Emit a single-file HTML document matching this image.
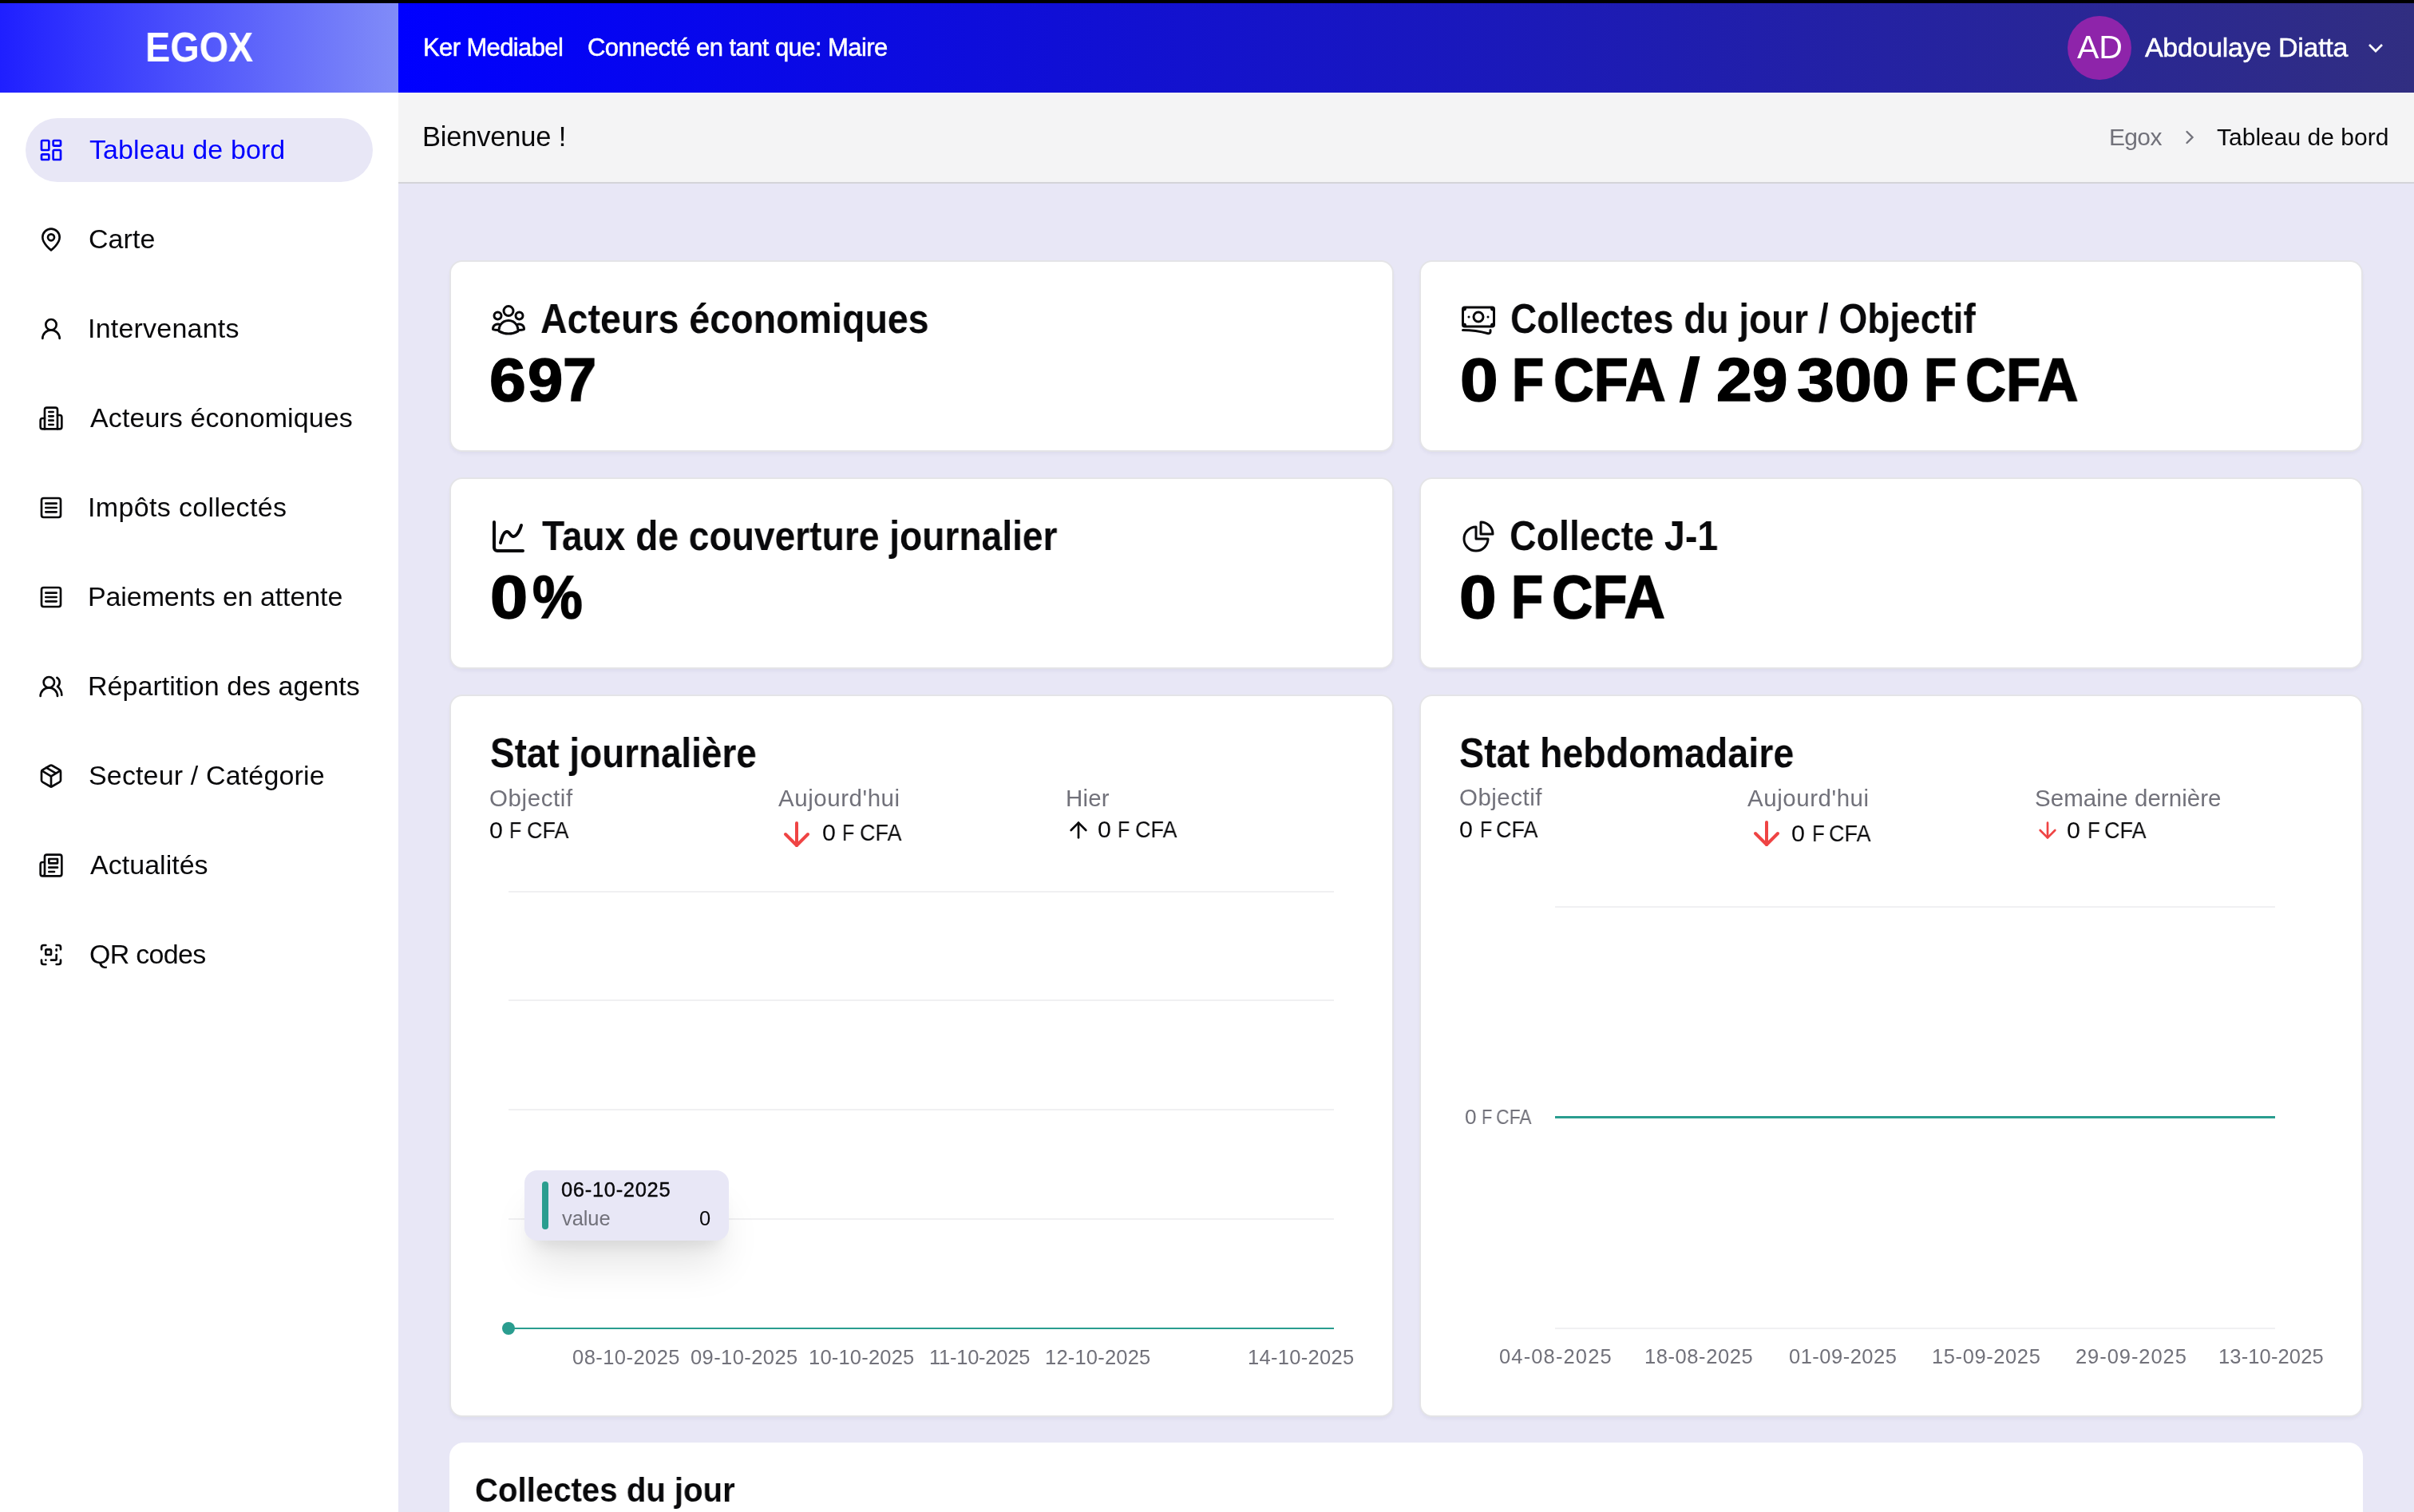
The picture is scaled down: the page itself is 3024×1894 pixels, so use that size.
<!DOCTYPE html><html lang="fr"><head><meta charset="utf-8"><title>Egox - Tableau de bord</title><style>
html,body{margin:0;padding:0;width:3024px;height:1894px;overflow:hidden;background:#e8e7f6;font-family:"Liberation Sans",sans-serif;}
.a{position:absolute;display:block}
.t{position:absolute;white-space:nowrap;margin:0;will-change:transform}
.card{position:absolute;background:#fff;border:2px solid #e4e4e7;border-radius:16px;box-sizing:border-box;box-shadow:0 3px 5px -1px rgba(40,40,90,0.06)}
.grid{position:absolute;height:2px;background:#f0f0f2}
@media (max-width:2000px){html{zoom:0.5}}
</style></head><body>
<div class="a" style="left:0;top:0;width:3024px;height:4px;background:#000"></div>
<div class="a" style="left:0;top:4px;width:499px;height:112px;background:linear-gradient(to right,#1f1fff,#818cf8)"></div>
<div class="a" style="left:499px;top:4px;width:2525px;height:112px;background:linear-gradient(to right,#0000ff,#312e81)"></div>
<div class="a" style="left:2590px;top:20px;width:80px;height:80px;border-radius:50%;background:#8e24aa"></div>
<svg class="a" style="left:2960.1px;top:44.3px" width="32" height="32" viewBox="0 0 24 24" fill="none" stroke="#fff" stroke-width="2" stroke-linecap="butt" stroke-linejoin="miter"><path d="m6 9 6 6 6-6"/></svg>
<div class="a" style="left:0;top:116px;width:499px;height:1778px;background:#fff"></div>
<div class="a" style="left:32px;top:148px;width:435px;height:80px;border-radius:40px;background:#e8e7f6"></div>
<svg class="a" style="left:47.8px;top:172.0px" width="32" height="32" viewBox="0 0 24 24" fill="none" stroke="#0000ff" stroke-width="2" stroke-linecap="round" stroke-linejoin="round"><rect width="7" height="9" x="3" y="3" rx="1"/><rect width="7" height="5" x="14" y="3" rx="1"/><rect width="7" height="9" x="14" y="12" rx="1"/><rect width="7" height="5" x="3" y="16" rx="1"/></svg>
<svg class="a" style="left:47.8px;top:284.0px" width="32" height="32" viewBox="0 0 24 24" fill="none" stroke="#09090b" stroke-width="2" stroke-linecap="round" stroke-linejoin="round"><path d="M20 10c0 6-8 12-8 12s-8-6-8-12a8 8 0 0 1 16 0Z"/><circle cx="12" cy="10" r="3"/></svg>
<svg class="a" style="left:47.8px;top:396.0px" width="32" height="32" viewBox="0 0 24 24" fill="none" stroke="#09090b" stroke-width="2" stroke-linecap="round" stroke-linejoin="round"><circle cx="12" cy="8" r="5"/><path d="M20 21a8 8 0 0 0-16 0"/></svg>
<svg class="a" style="left:47.8px;top:508.0px" width="32" height="32" viewBox="0 0 24 24" fill="none" stroke="#09090b" stroke-width="2" stroke-linecap="round" stroke-linejoin="round"><path d="M6 22V4a2 2 0 0 1 2-2h8a2 2 0 0 1 2 2v18Z"/><path d="M6 12H4a2 2 0 0 0-2 2v6a2 2 0 0 0 2 2h2"/><path d="M18 9h2a2 2 0 0 1 2 2v9a2 2 0 0 1-2 2h-2"/><path d="M10 6h4"/><path d="M10 10h4"/><path d="M10 14h4"/><path d="M10 18h4"/></svg>
<svg class="a" style="left:47.8px;top:620.0px" width="32" height="32" viewBox="0 0 24 24" fill="none" stroke="#09090b" stroke-width="2" stroke-linecap="round" stroke-linejoin="round"><rect width="18" height="18" x="3" y="3" rx="2"/><path d="M7 8h10"/><path d="M7 12h10"/><path d="M7 16h10"/></svg>
<svg class="a" style="left:47.8px;top:732.0px" width="32" height="32" viewBox="0 0 24 24" fill="none" stroke="#09090b" stroke-width="2" stroke-linecap="round" stroke-linejoin="round"><rect width="18" height="18" x="3" y="3" rx="2"/><path d="M7 8h10"/><path d="M7 12h10"/><path d="M7 16h10"/></svg>
<svg class="a" style="left:47.8px;top:844.0px" width="32" height="32" viewBox="0 0 24 24" fill="none" stroke="#09090b" stroke-width="2" stroke-linecap="round" stroke-linejoin="round"><path d="M18 21a8 8 0 0 0-16 0"/><circle cx="10" cy="8" r="5"/><path d="M22 20c0-3.37-2-6.5-4-8a5 5 0 0 0-.45-8.3"/></svg>
<svg class="a" style="left:47.8px;top:956.0px" width="32" height="32" viewBox="0 0 24 24" fill="none" stroke="#09090b" stroke-width="2" stroke-linecap="round" stroke-linejoin="round"><path d="M11 21.73a2 2 0 0 0 2 0l7-4A2 2 0 0 0 21 16V8a2 2 0 0 0-1-1.73l-7-4a2 2 0 0 0-2 0l-7 4A2 2 0 0 0 3 8v8a2 2 0 0 0 1 1.73z"/><path d="M12 22V12"/><path d="m3.3 7 7.703 4.734a2 2 0 0 0 1.994 0L20.7 7"/><path d="m7.5 4.27 9 5.15"/></svg>
<svg class="a" style="left:47.8px;top:1068.0px" width="32" height="32" viewBox="0 0 24 24" fill="none" stroke="#09090b" stroke-width="2" stroke-linecap="round" stroke-linejoin="round"><path d="M4 22h16a2 2 0 0 0 2-2V4a2 2 0 0 0-2-2H8a2 2 0 0 0-2 2v16a2 2 0 0 1-2 2Zm0 0a2 2 0 0 1-2-2v-9c0-1.1.9-2 2-2h2"/><path d="M18 14h-8"/><path d="M15 18h-5"/><path d="M10 6h8v4h-8V6Z"/></svg>
<svg class="a" style="left:47.8px;top:1180.0px" width="32" height="32" viewBox="0 0 24 24" fill="none" stroke="#09090b" stroke-width="2" stroke-linecap="round" stroke-linejoin="round"><path d="M17 12v4a1 1 0 0 1-1 1h-4"/><path d="M17 3h2a2 2 0 0 1 2 2v2"/><path d="M17 8V7"/><path d="M21 17v2a2 2 0 0 1-2 2h-2"/><path d="M3 7V5a2 2 0 0 1 2-2h2"/><path d="M7 17h.01"/><path d="M7 21H5a2 2 0 0 1-2-2v-2"/><rect x="7" y="7" width="5" height="5" rx="1"/></svg>
<div class="a" style="left:499px;top:116px;width:2525px;height:112px;background:#f4f4f5;border-bottom:2px solid #d4d4d8"></div>
<svg class="a" style="left:2728.7px;top:158.2px" width="28" height="28" viewBox="0 0 24 24" fill="none" stroke="#71717a" stroke-width="2" stroke-linecap="round" stroke-linejoin="miter"><path d="m9 18 6-6-6-6"/></svg>
<div class="card" style="left:563px;top:326px;width:1183px;height:240px;"></div>
<div class="card" style="left:1778px;top:326px;width:1182px;height:240px;"></div>
<div class="card" style="left:563px;top:598px;width:1183px;height:240px;"></div>
<div class="card" style="left:1778px;top:598px;width:1182px;height:240px;"></div>
<div class="card" style="left:563px;top:870px;width:1183px;height:905px;"></div>
<div class="card" style="left:1778px;top:870px;width:1182px;height:905px;"></div>
<div class="a" style="left:563px;top:1807px;width:2397px;height:200px;background:#fff;border-radius:18px"></div>
<svg class="a" style="left:613px;top:376px" width="48" height="48" viewBox="0 0 24 24" fill="none" stroke="#09090b" stroke-width="1.5" stroke-linecap="round" stroke-linejoin="round"><path d="M18 18.72a9.094 9.094 0 0 0 3.741-.479 3 3 0 0 0-4.682-2.72m.94 3.198.001.031c0 .225-.012.447-.037.666A11.944 11.944 0 0 1 12 21c-2.17 0-4.207-.576-5.963-1.584A6.062 6.062 0 0 1 6 18.719m12 0a5.971 5.971 0 0 0-.941-3.197m0 0A5.995 5.995 0 0 0 12 12.75a5.995 5.995 0 0 0-5.058 2.772m0 0a3 3 0 0 0-4.681 2.72 8.986 8.986 0 0 0 3.74.477m.94-3.197a5.971 5.971 0 0 0-.94 3.197M15 6.75a3 3 0 1 1-6 0 3 3 0 0 1 6 0Zm6 3a2.25 2.25 0 1 1-4.5 0 2.25 2.25 0 0 1 4.5 0Zm-13.5 0a2.25 2.25 0 1 1-4.5 0 2.25 2.25 0 0 1 4.5 0Z"/></svg>
<svg class="a" style="left:1828.3px;top:375.5px" width="48" height="48" viewBox="0 0 24 24" fill="none" stroke="#09090b" stroke-width="1.5" stroke-linecap="round" stroke-linejoin="round"><path d="M2.25 18.75a60.07 60.07 0 0 1 15.797 2.101c.727.198 1.453-.342 1.453-1.096V18.75M3.75 4.5v.75A.75.75 0 0 1 3 6h-.75m0 0v-.375c0-.621.504-1.125 1.125-1.125H20.25M2.25 6v9m18-10.5v.75c0 .414.336.75.75.75h.75m-1.5-1.5h.375c.621 0 1.125.504 1.125 1.125v9.75c0 .621-.504 1.125-1.125 1.125h-.375m1.5-1.5H21a.75.75 0 0 0-.75.75v.75m0 0H3.75m0 0h-.375a1.125 1.125 0 0 1-1.125-1.125V15m1.5 1.5v-.75A.75.75 0 0 0 3 15h-.75M15 10.5a3 3 0 1 1-6 0 3 3 0 0 1 6 0Zm3 0h.008v.008H18V10.5Zm-12 0h.008v.008H6V10.5Z"/></svg>
<svg class="a" style="left:613.3px;top:648px" width="48" height="48" viewBox="0 0 24 24" fill="none" stroke="#09090b" stroke-width="2" stroke-linecap="round" stroke-linejoin="round"><path d="M3 3v16a2 2 0 0 0 2 2h16"/><path d="M7 16c.5-2 1.5-7 4-7 2 0 2 3 4 3 2.5 0 4.5-5 5-7"/></svg>
<svg class="a" style="left:1827.8px;top:647.6px" width="48" height="48" viewBox="0 0 24 24" fill="none" stroke="#09090b" stroke-width="1.5" stroke-linecap="round" stroke-linejoin="round"><path d="M10.5 6a7.5 7.5 0 1 0 7.5 7.5h-7.5V6Z"/><path d="M13.5 10.5H21A7.5 7.5 0 0 0 13.5 3v7.5Z"/></svg>
<svg class="a" style="left:974px;top:1020.6px" width="48" height="48" viewBox="0 0 24 24" fill="none" stroke="#ef4444" stroke-width="2" stroke-linecap="round" stroke-linejoin="round"><path d="M12 5v14"/><path d="m19 12-7 7-7-7"/></svg>
<svg class="a" style="left:1335px;top:1024px" width="32" height="32" viewBox="0 0 24 24" fill="none" stroke="#09090b" stroke-width="2" stroke-linecap="round" stroke-linejoin="round"><path d="m5 12 7-7 7 7"/><path d="M12 19V5"/></svg>
<svg class="a" style="left:2188.6px;top:1020px" width="48" height="48" viewBox="0 0 24 24" fill="none" stroke="#ef4444" stroke-width="2" stroke-linecap="round" stroke-linejoin="round"><path d="M12 5v14"/><path d="m19 12-7 7-7-7"/></svg>
<svg class="a" style="left:2549.2px;top:1024px" width="32" height="32" viewBox="0 0 24 24" fill="none" stroke="#ef4444" stroke-width="2" stroke-linecap="round" stroke-linejoin="round"><path d="M12 5v14"/><path d="m19 12-7 7-7-7"/></svg>
<div class="grid" style="left:637px;top:1115.5px;width:1034px"></div>
<div class="grid" style="left:637px;top:1252px;width:1034px"></div>
<div class="grid" style="left:637px;top:1389px;width:1034px"></div>
<div class="grid" style="left:637px;top:1526px;width:1034px"></div>
<div class="a" style="left:637px;top:1662.6px;width:1034px;height:2.4px;background:#2a9d8f"></div>
<div class="a" style="left:629px;top:1656px;width:16px;height:16px;border-radius:50%;background:#2a9d8f"></div>
<div class="grid" style="left:1948px;top:1134.7px;width:902px"></div>
<div class="grid" style="left:1948px;top:1662.5px;width:902px"></div>
<div class="a" style="left:1948px;top:1398.3px;width:902px;height:2.4px;background:#2a9d8f"></div>
<div class="a" style="left:657.3px;top:1466px;width:255.4px;height:87.8px;border-radius:16px;background:#e8e7f6;box-shadow:0 40px 50px -10px rgba(0,0,0,0.10),0 16px 20px -12px rgba(0,0,0,0.10)"></div>
<div class="a" style="left:679px;top:1480px;width:8.2px;height:60px;border-radius:4px;background:#2a9d8f"></div>
<div class="t" id="egox" style="left:181.78px;top:33.06px;font-size:52px;line-height:52px;font-weight:700;color:#fff;letter-spacing:0.000px;transform:scaleX(0.8999);transform-origin:0 0;">EGOX</div>
<div class="t" id="ker" style="left:529.74px;top:44.10px;font-size:31px;line-height:31px;font-weight:500;color:#fff;letter-spacing:-0.619px;-webkit-text-stroke:0.5px #fff">Ker Mediabel</div>
<div class="t" id="conn" style="left:736.14px;top:44.10px;font-size:31px;line-height:31px;font-weight:500;color:#fff;letter-spacing:-0.577px;-webkit-text-stroke:0.5px #fff">Connecté en tant que: Maire</div>
<div class="t" id="ad" style="left:2601.54px;top:38.95px;font-size:41px;line-height:41px;font-weight:400;color:#fff;letter-spacing:0.000px;">AD</div>
<div class="t" id="name" style="left:2687.46px;top:42.37px;font-size:34px;line-height:34px;font-weight:500;color:#fff;letter-spacing:-0.306px;-webkit-text-stroke:0.5px #fff">Abdoulaye Diatta</div>
<div class="t" id="bienv" style="left:528.93px;top:153.85px;font-size:34.5px;line-height:34.5px;font-weight:400;color:#09090b;letter-spacing:-0.200px;">Bienvenue !</div>
<div class="t" id="bc1" style="left:2642.20px;top:156.85px;font-size:30px;line-height:30px;font-weight:400;color:#71717a;letter-spacing:-0.667px;">Egox</div>
<div class="t" id="bc2" style="left:2777.20px;top:156.85px;font-size:30px;line-height:30px;font-weight:400;color:#09090b;letter-spacing:0.015px;">Tableau de bord</div>
<div class="t" id="s0" style="left:112.06px;top:170.27px;font-size:34px;line-height:34px;font-weight:400;color:#0000ff;letter-spacing:0.100px;">Tableau de bord</div>
<div class="t" id="s1" style="left:111.06px;top:282.27px;font-size:34px;line-height:34px;font-weight:400;color:#09090b;letter-spacing:0.050px;">Carte</div>
<div class="t" id="s2" style="left:110.06px;top:394.27px;font-size:34px;line-height:34px;font-weight:400;color:#09090b;letter-spacing:0.216px;">Intervenants</div>
<div class="t" id="s3" style="left:113.06px;top:506.27px;font-size:34px;line-height:34px;font-weight:400;color:#09090b;letter-spacing:0.099px;">Acteurs économiques</div>
<div class="t" id="s4" style="left:110.06px;top:618.27px;font-size:34px;line-height:34px;font-weight:400;color:#09090b;letter-spacing:0.347px;">Impôts collectés</div>
<div class="t" id="s5" style="left:110.06px;top:730.27px;font-size:34px;line-height:34px;font-weight:400;color:#09090b;letter-spacing:-0.106px;">Paiements en attente</div>
<div class="t" id="s6" style="left:110.06px;top:842.27px;font-size:34px;line-height:34px;font-weight:400;color:#09090b;letter-spacing:0.030px;">Répartition des agents</div>
<div class="t" id="s7" style="left:111.06px;top:954.27px;font-size:34px;line-height:34px;font-weight:400;color:#09090b;letter-spacing:0.146px;">Secteur / Catégorie</div>
<div class="t" id="s8" style="left:113.06px;top:1066.27px;font-size:34px;line-height:34px;font-weight:400;color:#09090b;letter-spacing:0.024px;">Actualités</div>
<div class="t" id="s9" style="left:112.06px;top:1178.27px;font-size:34px;line-height:34px;font-weight:400;color:#09090b;letter-spacing:-0.714px;">QR codes</div>
<div class="t" id="c1t" style="left:677.18px;top:373.26px;font-size:52px;line-height:52px;font-weight:700;color:#09090b;letter-spacing:0.000px;transform:scaleX(0.8957);transform-origin:0 0;">Acteurs économiques</div>
<div class="t" id="c2t" style="left:1891.78px;top:373.26px;font-size:52px;line-height:52px;font-weight:700;color:#09090b;letter-spacing:0.000px;transform:scaleX(0.8845);transform-origin:0 0;">Collectes du jour / Objectif</div>
<div class="t" id="c3t" style="left:678.88px;top:645.46px;font-size:52px;line-height:52px;font-weight:700;color:#09090b;letter-spacing:0.000px;transform:scaleX(0.8876);transform-origin:0 0;">Taux de couverture journalier</div>
<div class="t" id="c4t" style="left:1891.38px;top:645.46px;font-size:52px;line-height:52px;font-weight:700;color:#09090b;letter-spacing:0.000px;transform:scaleX(0.8947);transform-origin:0 0;">Collecte J-1</div>
<div class="t" id="d_t" style="left:614.18px;top:917.36px;font-size:52px;line-height:52px;font-weight:700;color:#09090b;letter-spacing:0.000px;transform:scaleX(0.8815);transform-origin:0 0;">Stat journalière</div>
<div class="t" id="d_o" style="left:612.93px;top:984.77px;font-size:29.5px;line-height:29.5px;font-weight:400;color:#71717a;letter-spacing:0.600px;">Objectif</div>
<div class="t" id="d_a" style="left:974.73px;top:985.37px;font-size:29.5px;line-height:29.5px;font-weight:400;color:#71717a;letter-spacing:0.540px;">Aujourd&#x27;hui</div>
<div class="t" id="d_h" style="left:1334.73px;top:985.37px;font-size:29.5px;line-height:29.5px;font-weight:400;color:#71717a;letter-spacing:0.134px;">Hier</div>
<div class="t" id="w_t" style="left:1827.78px;top:916.96px;font-size:52px;line-height:52px;font-weight:700;color:#09090b;letter-spacing:0.000px;transform:scaleX(0.8956);transform-origin:0 0;">Stat hebdomadaire</div>
<div class="t" id="w_o" style="left:1828.13px;top:984.47px;font-size:29.5px;line-height:29.5px;font-weight:400;color:#71717a;letter-spacing:0.485px;">Objectif</div>
<div class="t" id="w_a" style="left:2188.93px;top:985.07px;font-size:29.5px;line-height:29.5px;font-weight:400;color:#71717a;letter-spacing:0.540px;">Aujourd&#x27;hui</div>
<div class="t" id="w_s" style="left:2549.13px;top:985.17px;font-size:29.5px;line-height:29.5px;font-weight:400;color:#71717a;letter-spacing:0.041px;">Semaine dernière</div>
<div class="t" id="dx0" style="left:716.87px;top:1687.65px;font-size:25.5px;line-height:25.5px;font-weight:400;color:#71717a;letter-spacing:0.445px;">08-10-2025</div>
<div class="t" id="dx1" style="left:865.47px;top:1687.65px;font-size:25.5px;line-height:25.5px;font-weight:400;color:#71717a;letter-spacing:0.421px;">09-10-2025</div>
<div class="t" id="dx2" style="left:1013.47px;top:1687.65px;font-size:25.5px;line-height:25.5px;font-weight:400;color:#71717a;letter-spacing:0.201px;">10-10-2025</div>
<div class="t" id="dx3" style="left:1163.67px;top:1687.65px;font-size:25.5px;line-height:25.5px;font-weight:400;color:#71717a;letter-spacing:-0.246px;">11-10-2025</div>
<div class="t" id="dx4" style="left:1308.67px;top:1687.65px;font-size:25.5px;line-height:25.5px;font-weight:400;color:#71717a;letter-spacing:0.201px;">12-10-2025</div>
<div class="t" id="dx5" style="left:1563.07px;top:1687.65px;font-size:25.5px;line-height:25.5px;font-weight:400;color:#71717a;letter-spacing:0.312px;">14-10-2025</div>
<div class="t" id="wx0" style="left:1877.67px;top:1687.15px;font-size:25.5px;line-height:25.5px;font-weight:400;color:#71717a;letter-spacing:1.135px;">04-08-2025</div>
<div class="t" id="wx1" style="left:2060.07px;top:1687.15px;font-size:25.5px;line-height:25.5px;font-weight:400;color:#71717a;letter-spacing:0.579px;">18-08-2025</div>
<div class="t" id="wx2" style="left:2241.17px;top:1687.15px;font-size:25.5px;line-height:25.5px;font-weight:400;color:#71717a;letter-spacing:0.488px;">01-09-2025</div>
<div class="t" id="wx3" style="left:2420.27px;top:1687.15px;font-size:25.5px;line-height:25.5px;font-weight:400;color:#71717a;letter-spacing:0.599px;">15-09-2025</div>
<div class="t" id="wx4" style="left:2599.77px;top:1687.15px;font-size:25.5px;line-height:25.5px;font-weight:400;color:#71717a;letter-spacing:0.934px;">29-09-2025</div>
<div class="t" id="wx5" style="left:2778.57px;top:1687.15px;font-size:25.5px;line-height:25.5px;font-weight:400;color:#71717a;letter-spacing:0.135px;">13-10-2025</div>
<div class="t" id="tt_d" style="left:703.07px;top:1478.45px;font-size:25.5px;line-height:25.5px;font-weight:500;color:#09090b;letter-spacing:0.688px;-webkit-text-stroke:0.4px #09090b">06-10-2025</div>
<div class="t" id="tt_v" style="left:704.07px;top:1514.25px;font-size:25.5px;line-height:25.5px;font-weight:400;color:#71717a;letter-spacing:-0.100px;">value</div>
<div class="t" id="tt_0" style="left:876.47px;top:1514.25px;font-size:25.5px;line-height:25.5px;font-weight:400;color:#09090b;letter-spacing:-0.800px;">0</div>
<div class="t" id="cdj" style="left:594.92px;top:1845.16px;font-size:43px;line-height:43px;font-weight:700;color:#09090b;letter-spacing:0.000px;transform:scaleX(0.9339);transform-origin:0 0;">Collectes du jour</div>
<div class="t" id="c1v_0" style="left:613.31px;top:437.76px;font-size:76.5px;line-height:76.5px;font-weight:700;color:#000;letter-spacing:0.000px;transform:scaleX(1.0775);transform-origin:0 0;-webkit-text-stroke:1.6px #000">6</div>
<div class="t" id="c1v_1" style="left:661.41px;top:437.76px;font-size:76.5px;line-height:76.5px;font-weight:700;color:#000;letter-spacing:0.000px;transform:scaleX(1.0413);transform-origin:0 0;-webkit-text-stroke:1.6px #000">9</div>
<div class="t" id="c1v_2" style="left:705.21px;top:437.76px;font-size:76.5px;line-height:76.5px;font-weight:700;color:#000;letter-spacing:0.000px;transform:scaleX(0.9899);transform-origin:0 0;-webkit-text-stroke:1.6px #000">7</div>
<div class="t" id="c3v_0" style="left:613.71px;top:709.76px;font-size:76.5px;line-height:76.5px;font-weight:700;color:#000;letter-spacing:0.000px;transform:scaleX(1.1081);transform-origin:0 0;-webkit-text-stroke:1.6px #000">0</div>
<div class="t" id="c3v_1" style="left:666.61px;top:709.76px;font-size:76.5px;line-height:76.5px;font-weight:700;color:#000;letter-spacing:0.000px;transform:scaleX(0.9215);transform-origin:0 0;-webkit-text-stroke:1.6px #000">%</div>
<div class="t" id="c2v_0" style="left:1829.01px;top:437.96px;font-size:76.5px;line-height:76.5px;font-weight:700;color:#000;letter-spacing:0.000px;transform:scaleX(1.1187);transform-origin:0 0;-webkit-text-stroke:1.6px #000">0</div>
<div class="t" id="c2v_1" style="left:1893.91px;top:437.96px;font-size:76.5px;line-height:76.5px;font-weight:700;color:#000;letter-spacing:0.000px;transform:scaleX(0.8588);transform-origin:0 0;-webkit-text-stroke:1.6px #000">F</div>
<div class="t" id="c2v_2" style="left:1945.51px;top:437.96px;font-size:76.5px;line-height:76.5px;font-weight:700;color:#000;letter-spacing:0.000px;transform:scaleX(0.9188);transform-origin:0 0;-webkit-text-stroke:1.6px #000">CFA</div>
<div class="t" id="c2v_3" style="left:2104.31px;top:437.96px;font-size:76.5px;line-height:76.5px;font-weight:700;color:#000;letter-spacing:0.000px;transform:scaleX(1.1922);transform-origin:0 0;-webkit-text-stroke:1.6px #000">/</div>
<div class="t" id="c2v_4" style="left:2149.81px;top:437.96px;font-size:76.5px;line-height:76.5px;font-weight:700;color:#000;letter-spacing:0.000px;transform:scaleX(1.0512);transform-origin:0 0;-webkit-text-stroke:1.6px #000">29</div>
<div class="t" id="c2v_5" style="left:2251.31px;top:437.96px;font-size:76.5px;line-height:76.5px;font-weight:700;color:#000;letter-spacing:0.000px;transform:scaleX(1.1040);transform-origin:0 0;-webkit-text-stroke:1.6px #000">300</div>
<div class="t" id="c2v_6" style="left:2410.41px;top:437.96px;font-size:76.5px;line-height:76.5px;font-weight:700;color:#000;letter-spacing:0.000px;transform:scaleX(0.8804);transform-origin:0 0;-webkit-text-stroke:1.6px #000">F</div>
<div class="t" id="c2v_7" style="left:2461.61px;top:437.96px;font-size:76.5px;line-height:76.5px;font-weight:700;color:#000;letter-spacing:0.000px;transform:scaleX(0.9239);transform-origin:0 0;-webkit-text-stroke:1.6px #000">CFA</div>
<div class="t" id="c4v_0" style="left:1827.61px;top:709.96px;font-size:76.5px;line-height:76.5px;font-weight:700;color:#000;letter-spacing:0.000px;transform:scaleX(1.0954);transform-origin:0 0;-webkit-text-stroke:1.6px #000">0</div>
<div class="t" id="c4v_1" style="left:1892.51px;top:709.96px;font-size:76.5px;line-height:76.5px;font-weight:700;color:#000;letter-spacing:0.000px;transform:scaleX(0.8588);transform-origin:0 0;-webkit-text-stroke:1.6px #000">F</div>
<div class="t" id="c4v_2" style="left:1944.11px;top:709.96px;font-size:76.5px;line-height:76.5px;font-weight:700;color:#000;letter-spacing:0.000px;transform:scaleX(0.9266);transform-origin:0 0;-webkit-text-stroke:1.6px #000">CFA</div>
<div class="t" id="d_ov_0" style="left:612.93px;top:1024.67px;font-size:29.5px;line-height:29.5px;font-weight:400;color:#09090b;letter-spacing:0.000px;transform:scaleX(1.0292);transform-origin:0 0;">0</div>
<div class="t" id="d_ov_1" style="left:638.43px;top:1024.67px;font-size:29.5px;line-height:29.5px;font-weight:400;color:#09090b;letter-spacing:0.000px;transform:scaleX(0.8469);transform-origin:0 0;">F</div>
<div class="t" id="d_ov_2" style="left:659.73px;top:1024.67px;font-size:29.5px;line-height:29.5px;font-weight:400;color:#09090b;letter-spacing:0.000px;transform:scaleX(0.9144);transform-origin:0 0;">CFA</div>
<div class="t" id="d_av_0" style="left:1029.93px;top:1028.47px;font-size:29.5px;line-height:29.5px;font-weight:400;color:#09090b;letter-spacing:0.000px;transform:scaleX(1.0292);transform-origin:0 0;">0</div>
<div class="t" id="d_av_1" style="left:1055.43px;top:1028.47px;font-size:29.5px;line-height:29.5px;font-weight:400;color:#09090b;letter-spacing:0.000px;transform:scaleX(0.8469);transform-origin:0 0;">F</div>
<div class="t" id="d_av_2" style="left:1076.73px;top:1028.47px;font-size:29.5px;line-height:29.5px;font-weight:400;color:#09090b;letter-spacing:0.000px;transform:scaleX(0.9144);transform-origin:0 0;">CFA</div>
<div class="t" id="d_hv_0" style="left:1374.93px;top:1024.47px;font-size:29.5px;line-height:29.5px;font-weight:400;color:#09090b;letter-spacing:0.000px;transform:scaleX(1.0292);transform-origin:0 0;">0</div>
<div class="t" id="d_hv_1" style="left:1400.43px;top:1024.47px;font-size:29.5px;line-height:29.5px;font-weight:400;color:#09090b;letter-spacing:0.000px;transform:scaleX(0.8469);transform-origin:0 0;">F</div>
<div class="t" id="d_hv_2" style="left:1421.73px;top:1024.47px;font-size:29.5px;line-height:29.5px;font-weight:400;color:#09090b;letter-spacing:0.000px;transform:scaleX(0.9144);transform-origin:0 0;">CFA</div>
<div class="t" id="w_ov_0" style="left:1828.23px;top:1024.17px;font-size:29.5px;line-height:29.5px;font-weight:400;color:#09090b;letter-spacing:0.000px;transform:scaleX(1.0292);transform-origin:0 0;">0</div>
<div class="t" id="w_ov_1" style="left:1853.73px;top:1024.17px;font-size:29.5px;line-height:29.5px;font-weight:400;color:#09090b;letter-spacing:0.000px;transform:scaleX(0.8469);transform-origin:0 0;">F</div>
<div class="t" id="w_ov_2" style="left:1874.03px;top:1024.17px;font-size:29.5px;line-height:29.5px;font-weight:400;color:#09090b;letter-spacing:0.000px;transform:scaleX(0.9144);transform-origin:0 0;">CFA</div>
<div class="t" id="w_av_0" style="left:2244.43px;top:1028.67px;font-size:29.5px;line-height:29.5px;font-weight:400;color:#09090b;letter-spacing:0.000px;transform:scaleX(1.0340);transform-origin:0 0;">0</div>
<div class="t" id="w_av_1" style="left:2269.93px;top:1028.67px;font-size:29.5px;line-height:29.5px;font-weight:400;color:#09090b;letter-spacing:0.000px;transform:scaleX(0.8731);transform-origin:0 0;">F</div>
<div class="t" id="w_av_2" style="left:2291.23px;top:1028.67px;font-size:29.5px;line-height:29.5px;font-weight:400;color:#09090b;letter-spacing:0.000px;transform:scaleX(0.9159);transform-origin:0 0;">CFA</div>
<div class="t" id="w_sv_0" style="left:2589.03px;top:1025.07px;font-size:29.5px;line-height:29.5px;font-weight:400;color:#09090b;letter-spacing:0.000px;transform:scaleX(1.0340);transform-origin:0 0;">0</div>
<div class="t" id="w_sv_1" style="left:2614.53px;top:1025.07px;font-size:29.5px;line-height:29.5px;font-weight:400;color:#09090b;letter-spacing:0.000px;transform:scaleX(0.8731);transform-origin:0 0;">F</div>
<div class="t" id="w_sv_2" style="left:2635.83px;top:1025.07px;font-size:29.5px;line-height:29.5px;font-weight:400;color:#09090b;letter-spacing:0.000px;transform:scaleX(0.9159);transform-origin:0 0;">CFA</div>
<div class="t" id="wy_0" style="left:1834.97px;top:1387.45px;font-size:25.5px;line-height:25.5px;font-weight:400;color:#71717a;letter-spacing:0.000px;transform:scaleX(1.0283);transform-origin:0 0;">0</div>
<div class="t" id="wy_1" style="left:1856.31px;top:1387.45px;font-size:25.5px;line-height:25.5px;font-weight:400;color:#71717a;letter-spacing:0.000px;transform:scaleX(0.8569);transform-origin:0 0;">F</div>
<div class="t" id="wy_2" style="left:1874.17px;top:1387.45px;font-size:25.5px;line-height:25.5px;font-weight:400;color:#71717a;letter-spacing:0.000px;transform:scaleX(0.9001);transform-origin:0 0;">CFA</div>
</body></html>
